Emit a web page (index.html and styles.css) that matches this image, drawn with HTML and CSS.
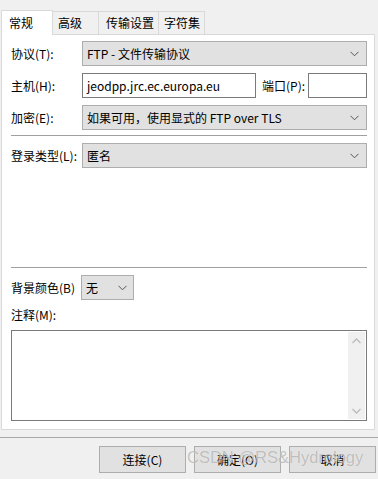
FILE: index.html
```html
<!DOCTYPE html>
<html lang="zh">
<head>
<meta charset="utf-8">
<link rel="stylesheet" href="styles.css">
</head>
<body>
<div class="tabs">
  <div class="tab active">常规</div>
  <div class="tab w47">高级</div>
  <div class="tab w61">传输设置</div>
  <div class="tab w47">字符集</div>
</div>
<div class="panel">
  <div class="row r1">
    <span class="lbl">协议(T):</span>
    <div class="combo wide"><span>FTP - 文件传输协议</span><svg class="chev" width="9" height="6" viewBox="0 0 9 6"><polyline points="0.5,0.8 4.5,4.8 8.5,0.8" fill="none" stroke="#555" stroke-width="1"/></svg></div>
  </div>
  <div class="row r2">
    <span class="lbl">主机(H):</span>
    <div class="input host">jeodpp.jrc.ec.europa.eu</div>
    <span class="lbl port-lbl">端口(P):</span>
    <div class="input port"></div>
  </div>
  <div class="row r2">
    <span class="lbl">加密(E):</span>
    <div class="combo wide"><span>如果可用，使用显式的 FTP over TLS</span><svg class="chev" width="9" height="6" viewBox="0 0 9 6"><polyline points="0.5,0.8 4.5,4.8 8.5,0.8" fill="none" stroke="#555" stroke-width="1"/></svg></div>
  </div>
  <div class="sep s1"></div>
  <div class="row">
    <span class="lbl">登录类型(L):</span>
    <div class="combo wide"><span>匿名</span><svg class="chev" width="9" height="6" viewBox="0 0 9 6"><polyline points="0.5,0.8 4.5,4.8 8.5,0.8" fill="none" stroke="#555" stroke-width="1"/></svg></div>
  </div>
  <div class="sep s2"></div>
  <div class="row">
    <span class="lbl lbl-bg">背景颜色(B)</span>
    <div class="combo small"><span>无</span><svg class="chev" width="9" height="6" viewBox="0 0 9 6"><polyline points="0.5,0.8 4.5,4.8 8.5,0.8" fill="none" stroke="#555" stroke-width="1"/></svg></div>
  </div>
  <div class="note-lbl">注释(M):</div>
  <div class="textarea">
    <div class="scroll">
      <svg width="9" height="6" viewBox="0 0 9 6"><polyline points="0.5,5 4.5,1 8.5,5" fill="none" stroke="#bdbdbd" stroke-width="1.4"/></svg>
      <svg width="9" height="6" viewBox="0 0 9 6"><polyline points="0.5,1 4.5,5 8.5,1" fill="none" stroke="#bdbdbd" stroke-width="1.4"/></svg>
    </div>
  </div>
</div>
<div class="footer-line"></div>
<div class="buttons">
  <div class="btn">连接(C)</div>
  <div class="btn">确定(O)</div>
  <div class="btn">取消</div>
</div>
<div class="watermark">CSDN @RS&amp;Hydrology</div>
</body>
</html>
```
FILE: styles.css
```css
html, body {
  margin: 0;
  padding: 0;
}
body {
  width: 378px;
  height: 479px;
  background: #f0f0f0;
  font-family: "Noto Sans CJK SC", "Noto Sans", sans-serif;
  font-size: 12px;
  color: #000;
  position: relative;
  overflow: hidden;
}
.tabs {
  display: flex;
  align-items: flex-end;
  height: 35px;
  padding-left: 1px;
  box-sizing: border-box;
}
.tab {
  box-sizing: border-box;
  height: 23px;
  border: 1px solid #d9d9d9;
  border-bottom: none;
  background: #f0f0f0;
  display: flex;
  align-items: center;
  padding-left: 5px;
  margin-left: -1px;
  line-height: 1;
  margin-bottom: 1px;
}
.tab:first-child { margin-left: 0; }
.tab.active {
  width: 52px;
  height: 25px;
  background: #fff;
  padding-left: 7px;
  margin-bottom: 0;
  position: relative;
  z-index: 1;
}
.w47 { width: 47px; }
.w61 { width: 61px; padding-left: 7px; }
.panel {
  margin-top: -1px;
  margin-left: 1px;
  width: 374px;
  height: 396px;
  box-sizing: border-box;
  border: 1px solid #d9d9d9;
  background: #fff;
  padding: 6px 7px 0 9px;
}
.row {
  display: flex;
  align-items: center;
}
.r2 { margin-top: 7px; }
.lbl {
  width: 71px;
  flex: none;
  white-space: nowrap;
}
.combo {
  box-sizing: border-box;
  height: 25px;
  border: 1px solid #adadad;
  background: #e1e1e1;
  display: flex;
  align-items: center;
  justify-content: space-between;
  padding: 0 7px 0 4px;
}
.combo.wide { flex: 1; }
.combo.small { width: 53px; margin-left: -1px; padding-right: 6px; }
.chev { flex: none; }
.input {
  box-sizing: border-box;
  height: 25px;
  border: 1px solid #7a7a7a;
  background: #fff;
  display: flex;
  align-items: center;
  padding-left: 4px;
}
.host { width: 174px; }
.port-lbl { width: auto; margin-left: 6px; margin-right: 3px; }
.port { flex: 1; }
.sep {
  height: 1px;
  background: #a0a0a0;
}
.s1 { margin: 5px 0 7px; }
.s2 { margin: 99px 0 7px; }
.note-lbl {
  margin-top: 7px;
  height: 16px;
  line-height: 16px;
}
.textarea {
  margin-top: 7px;
  height: 91px;
  box-sizing: border-box;
  border: 1px solid #7a7a7a;
  background: #fff;
  display: flex;
  justify-content: flex-end;
  padding: 1px;
}
.scroll {
  width: 17px;
  background: #f0f0f0;
  display: flex;
  flex-direction: column;
  justify-content: space-between;
  align-items: center;
  padding: 6px 0 5px;
  box-sizing: border-box;
}
.scroll svg { display: block; }
.footer-line {
  margin-top: 7px;
  height: 1px;
  background: #a9a9a9;
}
.buttons {
  display: flex;
  justify-content: flex-end;
  gap: 8px;
  margin-top: 8px;
  padding-right: 2px;
}
.btn {
  box-sizing: border-box;
  width: 87px;
  height: 27px;
  border: 1px solid #adadad;
  background: #e1e1e1;
  display: flex;
  align-items: center;
  justify-content: center;
}
.watermark {
  position: absolute;
  left: 187px;
  top: 448px;
  font-family: "Liberation Sans", Arial, sans-serif;
  font-size: 16.5px;
  color: rgba(120, 120, 120, 0.45);
  text-shadow: 0 0 1px rgba(255, 255, 255, 0.8);
  white-space: nowrap;
}
```
